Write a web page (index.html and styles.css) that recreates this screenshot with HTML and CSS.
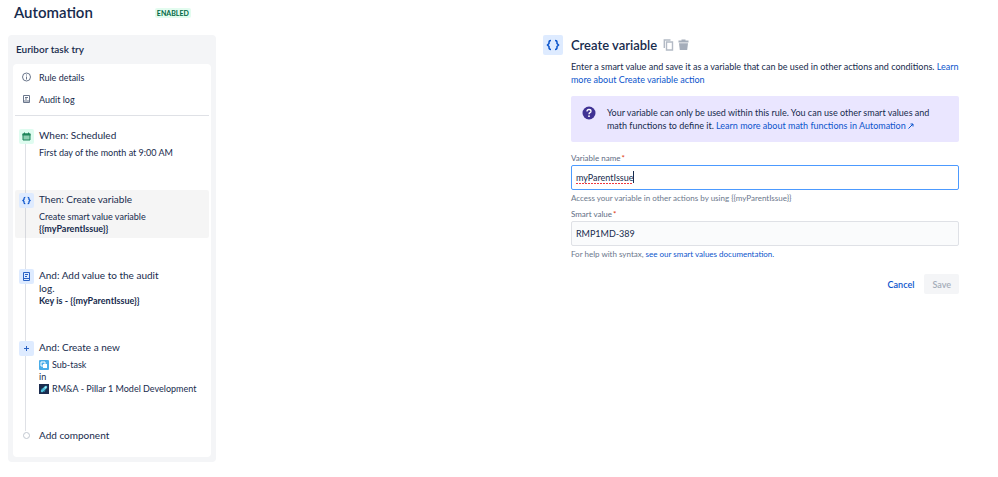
FILE: index.html
```html
<!DOCTYPE html>
<html lang="en">
  <head>
    <meta charset="utf-8">
    <meta name="viewport" content="width=device-width, initial-scale=1">
    <title>Automation</title>
    <link rel="stylesheet" href="styles.css">
  </head>

  <body>
    <header class="page-header">
      <h1>Automation</h1>
      <span class="badge">Enabled</span>
    </header>

    <main class="container">
      <section class="rule">
        <h2>Euribor task try</h2>

        <div class="rule-card">
          <nav class="rule-nav">
            <a href="#details">
              <svg width="15" height="10" viewBox="0 0 15 10" fill="none" stroke="#6b778c">
                <circle cx="7.5" cy="5" r="4"/>
                <path d="M7.5 4.5v3M7.5 2.5v1"/>
              </svg>
              Rule details
            </a>
            <a href="#log">
              <svg width="15" height="10" viewBox="0 0 15 10" fill="none" stroke="#6b778c">
                <path d="M4.500 1.500h6v7h-6zM4.500 7h6M6 3.500h3M6 5h2"/>
              </svg>
              Audit log
            </a>
          </nav>

          <ol class="steps">
            <li class="step">
              <span class="step-icon green">
                <svg width="15" height="15" viewBox="0 0 15 15" fill="none" stroke="#1f845a">
                  <path d="M4 5h7v6H4z" fill="#8fd0b3"/>
                  <path d="M3.500 5.500h8" stroke-width="2"/>
                  <path d="M5.500 3.500v2M9.500 3.500v2"/>
                </svg>
              </span>
              <div>
                <h3>When: Scheduled</h3>
                <p class="spaced">First day of the month at 9:00 AM</p>
              </div>
            </li>

            <li class="step selected">
              <span class="step-icon">
                <svg width="15" height="15" viewBox="0 0 15 15" fill="none" stroke="#0c55cc" stroke-width="1.200">
                  <path d="M6.300 4.300q-1.300 0-1.300 1.300v.8l-1.100 1.100 1.100 1.100v.8q0 1.300 1.300 1.300M8.700 4.300q1.300 0 1.300 1.300v.8l1.100 1.100-1.100 1.100v.8q0 1.300-1.300 1.300"/>
                </svg>
              </span>
              <div>
                <h3>Then: Create variable</h3>
                <p class="spaced">Create smart value variable<br><b>{{myParentIssue}}</b></p>
              </div>
            </li>

            <li class="step">
              <span class="step-icon">
                <svg width="15" height="15" viewBox="0 0 15 15" fill="none" stroke="#2a62c4">
                  <path d="M4.500 3.500h6v8h-6zM4.500 9.500h6M6 5.500h3M6 7.500h2"/>
                </svg>
              </span>
              <div>
                <h3>And: Add value to the audit log.</h3>
                <p><b>Key is - {{myParentIssue}}</b></p>
              </div>
            </li>

            <li class="step">
              <span class="step-icon">
                <svg width="15" height="15" viewBox="0 0 15 15" fill="none" stroke="#2a62c4">
                  <path d="M7.500 5v5M5 7.500h5"/>
                </svg>
              </span>
              <div>
                <h3>And: Create a new</h3>
                <p class="spaced with-icon">
                  <svg width="10" height="10" viewBox="0 0 10 10">
                    <rect width="10" height="10" rx="1" fill="#4bade8"/>
                    <path d="M2 2h4v4H2z" fill="none" stroke="#fff"/>
                    <path d="M4 4h4v4H4z" fill="#fff"/>
                  </svg>
                  Sub-task
                </p>
                <p>in</p>
                <p class="with-icon">
                  <svg width="10" height="10" viewBox="0 0 10 10">
                    <rect width="10" height="10" fill="#1b2c4f"/>
                    <path d="M3 7l4-4" stroke="#4fc3dc" stroke-width="2.500" stroke-linecap="round"/>
                    <path d="M2 5.500l2-1M5 8l1-2" stroke="#2684a8"/>
                    <circle cx="6.500" cy="3.500" r="1" fill="#b3ecf5"/>
                  </svg>
                  RM&amp;A - Pillar 1 Model Development
                </p>
              </div>
            </li>

            <li class="step">
              <span class="step-end"></span>
              <h3>Add component</h3>
            </li>
          </ol>
        </div>
      </section>

      <section class="editor">
        <span class="editor-icon">
          <svg width="20" height="20" viewBox="0 0 20 20" fill="none" stroke="#0c55cc" stroke-width="1.500">
            <path d="M8 5.500q-2 0-2 1.700v1.300L4.500 10 6 11.500v1.300q0 1.700 2 1.700M12 5.500q2 0 2 1.700v1.300l1.500 1.500-1.500 1.500v1.300q0 1.700-2 1.700"/>
          </svg>
        </span>

        <div class="editor-body">
          <div class="editor-title">
            <h2>Create variable</h2>
            <button type="button" class="icon-button" aria-label="Copy">
              <svg width="11" height="12" viewBox="0 0 11 12" fill="none" stroke="#b3bac5" stroke-width="1.400">
                <path d="M3.500 3h6v8h-6z"/>
                <path d="M1.300 9V1h6.200"/>
              </svg>
            </button>
            <button type="button" class="icon-button" aria-label="Delete">
              <svg width="11" height="12" viewBox="0 0 11 12" fill="#a5adba">
                <path d="M.5 1.500h3V.5h4v1h3V3.500H.5zM1 4.300h9l-.8 6.700H1.800z"/>
              </svg>
            </button>
          </div>

          <p class="intro">Enter a smart value and save it as a variable that can be used in other actions and conditions. <a href="#variable">Learn more about Create variable action</a></p>

          <div class="info">
            <svg width="14" height="14" viewBox="0 0 14 14">
              <circle cx="7" cy="7" r="6.500" fill="#403294"/>
              <path d="M5 5.500q0-2 2-2t2 1.700q0 1-1 1.500t-1 1.500" fill="none" stroke="#fff" stroke-width="1.300"/>
              <circle cx="7" cy="10.200" r=".9" fill="#fff"/>
            </svg>
            <p>Your variable can only be used within this rule. You can use other smart values and math functions to define it. <a href="#math">Learn more about math functions in Automation
              <svg width="6" height="6" viewBox="0 0 6 6" fill="none" stroke="#0c55cc"><path d="M.5 5.500l4.500-4.500M2.500 1h2.500v2.500"/></svg></a></p>
          </div>

          <form>
            <label for="name">Variable name<span class="required">*</span></label>
            <input id="name" class="active" type="text" value="myParentIssue" spellcheck="false">
            <p class="help">Access your variable in other actions by using {{myParentIssue}}</p>

            <label for="value">Smart value<span class="required">*</span></label>
            <input id="value" type="text" value="RMP1MD-389" spellcheck="false">
            <p class="help">For help with syntax, <a href="#docs">see our smart values documentation.</a></p>

            <div class="buttons">
              <button type="button" class="cancel">Cancel</button>
              <button type="submit" class="save" disabled>Save</button>
            </div>
          </form>
        </div>
      </section>
    </main>
  </body>
</html>
```
FILE: styles.css
```css
* {
  box-sizing: border-box;
}

body {
  margin: 0;
  padding: 4px 39px 15px 8px;
  background-color: #fff;
  color: #172b4d;
  font-family: Lato, "Open Sans", sans-serif;
  font-size: 9px;
  line-height: 13px;
}

h1, h2, h3, p, ol {
  margin: 0;
  padding: 0;
}

a {
  color: #0c55cc;
  text-decoration: none;
}

svg {
  flex: none;
}

button {
  font: inherit;
  border: none;
  cursor: pointer;
}

/* header */
.page-header {
  display: flex;
  align-items: center;
  gap: 62px;
  height: 17px;
  padding-left: 6px;
  margin-bottom: 14px;
}

h1 {
  font-size: 15px;
  font-weight: 600;
}

.badge {
  padding: 0 2px;
  border-radius: 2px;
  background-color: #e3fcef;
  color: #006644;
  font-size: 7px;
  line-height: 10px;
  font-weight: 700;
  text-transform: uppercase;
}

.container {
  display: grid;
  grid-template-columns: 7fr 11fr 14fr;
  align-items: start;
}

/* rule sidebar */
.rule {
  padding: 5px;
  border-radius: 4px;
  background-color: #f4f5f7;
}

.rule h2 {
  padding: 3px 3px 8px;
  font-size: 10px;
  font-weight: 600;
}

.rule-card {
  padding: 2px 2px 12px;
  border-radius: 4px;
  background-color: #fff;
}

.rule-nav {
  padding-bottom: 5px;
  border-bottom: 1px solid #dfe1e6;
}

.rule-nav a {
  display: flex;
  align-items: center;
  gap: 5px;
  height: 22px;
  padding-left: 4px;
  color: #172b4d;
}

.steps {
  display: flex;
  flex-direction: column;
  gap: 28px;
  margin-top: 10px;
  list-style: none;
  background: linear-gradient(#dfe1e6, #dfe1e6) 10px 10px / 1px calc(100% - 24px) no-repeat;
}

.step {
  display: flex;
  gap: 5px;
  padding: 3px 4px;
  border-radius: 2px;
}

.step.selected {
  background-color: rgba(0, 0, 0, 0.04);
}

.step h3 {
  max-width: 136px;
  font-size: 10px;
  font-weight: 400;
}

.step p {
  line-height: 12px;
}

.step .spaced {
  margin-top: 5px;
}

.with-icon {
  display: flex;
  align-items: center;
  gap: 3px;
}

.step-icon {
  flex: none;
  width: 15px;
  height: 15px;
  border-radius: 2px;
  background-color: #deebff;
}

.step-icon svg {
  display: block;
}

.step-icon.green {
  background-color: #dffcf0;
}

.step-end {
  flex: none;
  width: 7px;
  height: 7px;
  margin: 3px 4px;
  border: 1px solid #c1c7d0;
  border-radius: 50%;
  background-color: #fff;
}

/* component editor */
.editor {
  grid-column: 3;
  display: flex;
  gap: 8px;
}

.editor-icon {
  flex: none;
  width: 20px;
  height: 20px;
  border-radius: 2px;
  background-color: #deebff;
}

.editor-body {
  flex: 1;
}

.editor-title {
  display: flex;
  align-items: center;
  gap: 4px;
  height: 20px;
}

.editor-title h2 {
  margin-right: 2px;
  font-size: 13px;
  font-weight: 600;
}

.icon-button {
  display: flex;
  padding: 0;
  background: none;
}

.intro {
  margin-top: 5px;
}

.info {
  display: flex;
  gap: 11px;
  margin-top: 10px;
  padding: 10px 24px 10px 11px;
  border-radius: 2px;
  background-color: #eae6ff;
}

form {
  margin-top: 11px;
}

label {
  display: block;
  color: #5e6c84;
  font-size: 8px;
  line-height: 10px;
}

.required {
  margin-left: 1px;
  color: #de350b;
}

input {
  display: block;
  width: 100%;
  height: 25px;
  margin-top: 2px;
  padding: 0 4px;
  border: 1px solid #dfe1e6;
  border-radius: 2px;
  background-color: #fafbfc;
  color: #172b4d;
  font: inherit;
  outline: none;
}

/* misspelling mark and text caret */
input.active {
  border-color: #4c9aff;
  background:
    repeating-linear-gradient(90deg, #f0383d 0 2px, #fff 2px 3px) 4px 17px / 57px 1px no-repeat,
    linear-gradient(#172b4d, #172b4d) 61px 5px / 1px 12px no-repeat,
    #fff;
}

.help {
  margin: 3px 0 6px;
  color: #6b778c;
  font-size: 8px;
  line-height: 10px;
}

.buttons {
  display: flex;
  justify-content: flex-end;
  gap: 2px;
  margin-top: 15px;
}

.buttons button {
  height: 20px;
  padding: 0 8px;
  border-radius: 2px;
  font-weight: 600;
}

.cancel {
  background: none;
  color: #0c55cc;
}

.save {
  background-color: #f4f5f7;
  color: #a5adba;
}
```
